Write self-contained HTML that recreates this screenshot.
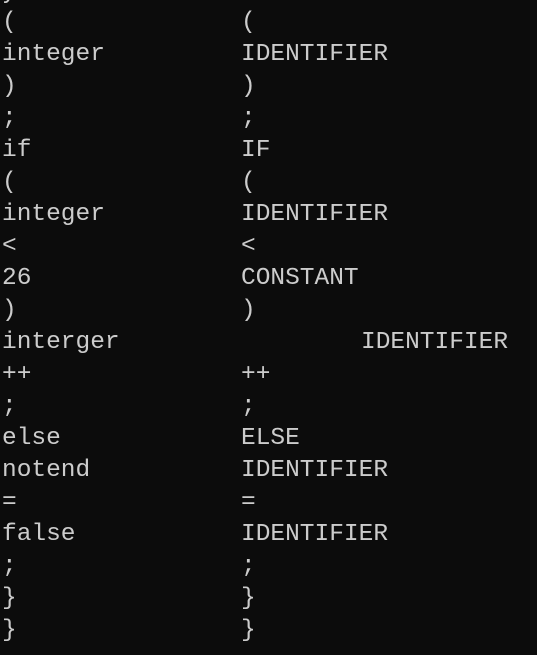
<html><head><style>
body{margin:0;background:#0c0c0c;width:537px;height:655px;overflow:hidden;position:relative}
.l{position:absolute;left:2px;height:32px;line-height:32px;font-family:"Liberation Mono",monospace;font-size:24.5px;color:#cccccc;white-space:pre}
.r{left:241px}
</style></head><body>
<div class="l" style="top:-23px">y</div>
<div class="l" style="top:7px">(</div><div class="l r" style="top:7px">(</div>
<div class="l" style="top:39px">integer</div><div class="l r" style="top:39px">IDENTIFIER</div>
<div class="l" style="top:71px">)</div><div class="l r" style="top:71px">)</div>
<div class="l" style="top:103px">;</div><div class="l r" style="top:103px">;</div>
<div class="l" style="top:135px">if</div><div class="l r" style="top:135px">IF</div>
<div class="l" style="top:167px">(</div><div class="l r" style="top:167px">(</div>
<div class="l" style="top:199px">integer</div><div class="l r" style="top:199px">IDENTIFIER</div>
<div class="l" style="top:231px">&lt;</div><div class="l r" style="top:231px">&lt;</div>
<div class="l" style="top:263px">26</div><div class="l r" style="top:263px">CONSTANT</div>
<div class="l" style="top:295px">)</div><div class="l r" style="top:295px">)</div>
<div class="l" style="top:327px">interger</div><div class="l r" style="top:327px;left:361px">IDENTIFIER</div>
<div class="l" style="top:359px">++</div><div class="l r" style="top:359px">++</div>
<div class="l" style="top:391px">;</div><div class="l r" style="top:391px">;</div>
<div class="l" style="top:423px">else</div><div class="l r" style="top:423px">ELSE</div>
<div class="l" style="top:455px">notend</div><div class="l r" style="top:455px">IDENTIFIER</div>
<div class="l" style="top:487px">=</div><div class="l r" style="top:487px">=</div>
<div class="l" style="top:519px">false</div><div class="l r" style="top:519px">IDENTIFIER</div>
<div class="l" style="top:551px">;</div><div class="l r" style="top:551px">;</div>
<div class="l" style="top:583px">}</div><div class="l r" style="top:583px">}</div>
<div class="l" style="top:615px">}</div><div class="l r" style="top:615px">}</div>
</body></html>
